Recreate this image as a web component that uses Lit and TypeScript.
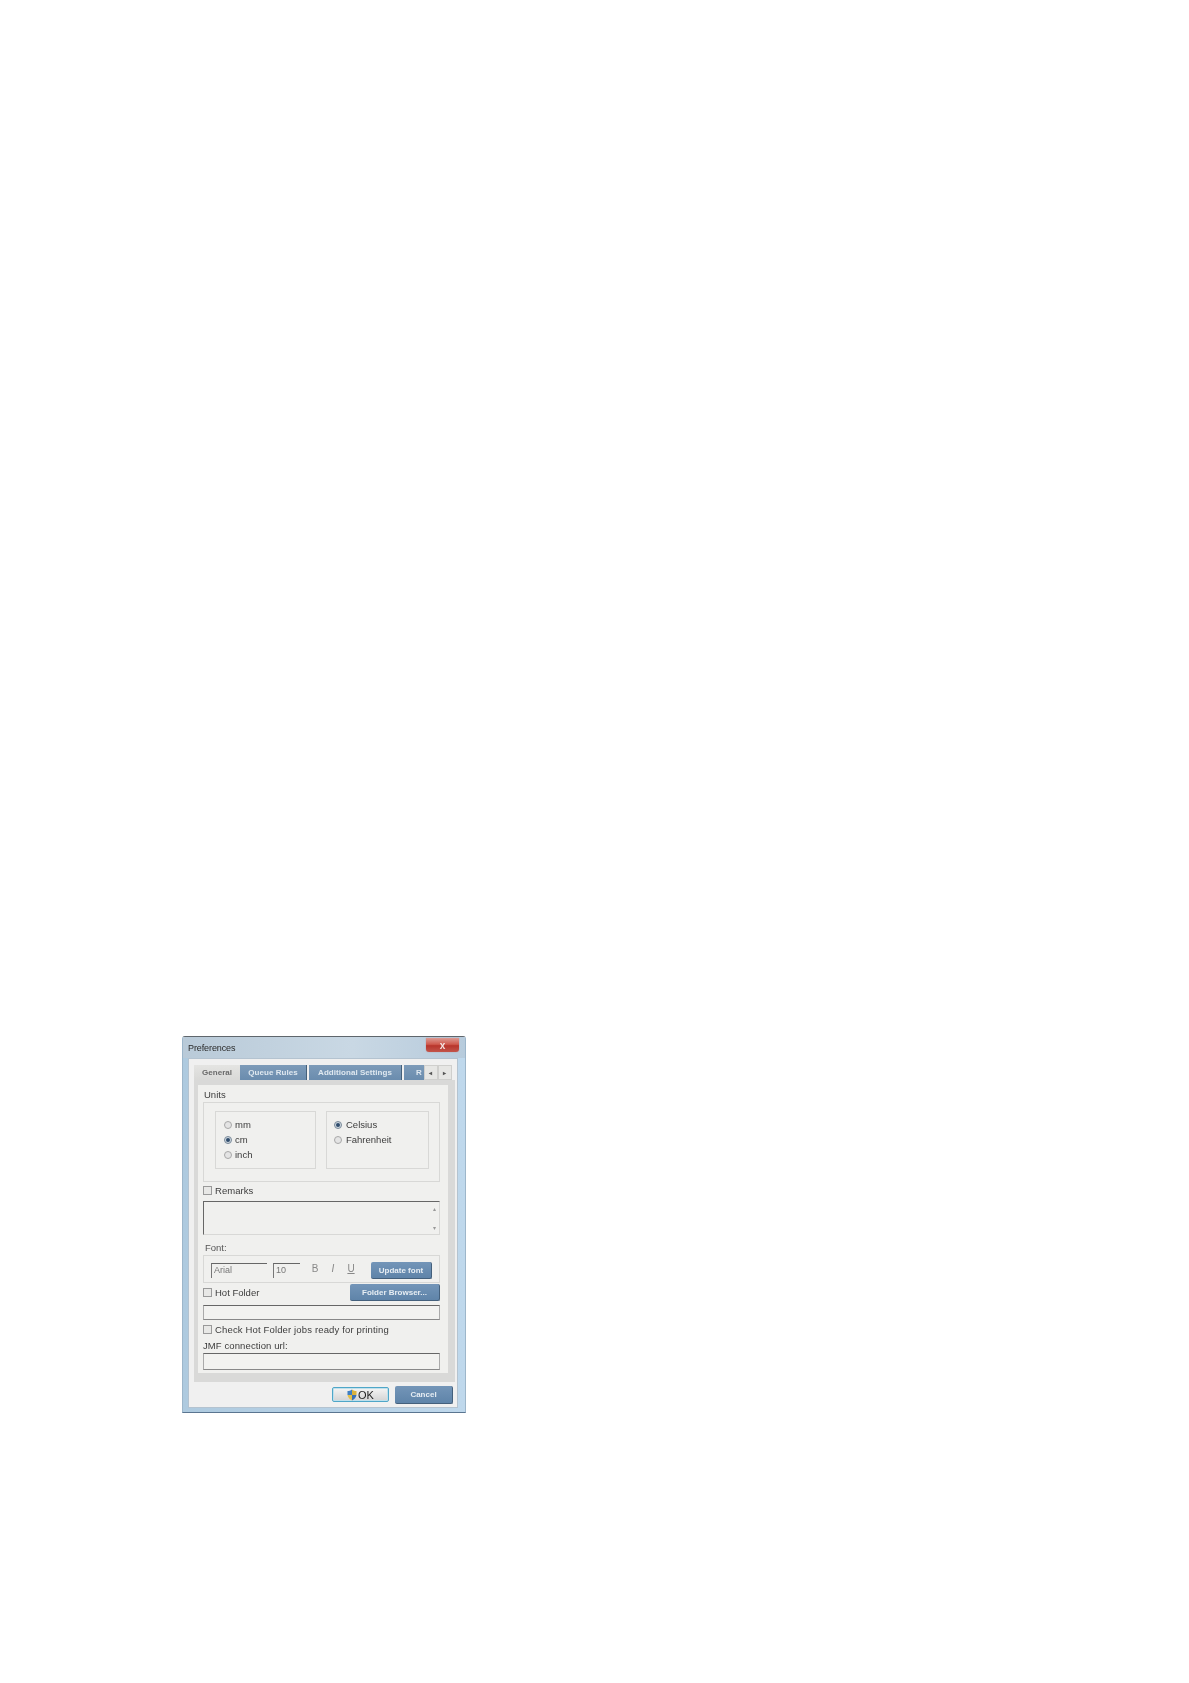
import { LitElement, html, css } from "lit";
import { customElement } from "lit/decorators.js";

@customElement("app-root")
export class AppRoot extends LitElement {
  static styles = css`
    :host { display: block; height: 1683px; background: #fff; padding: 1036px 0 0 182px; box-sizing: border-box;
      font-family: "Liberation Sans", Arial, sans-serif; font-size: 9.5px; color: #3c3c3c; }
    * { box-sizing: border-box; }
    .win { width: 284px; height: 377px; display: flex; flex-direction: column; padding: 0 7px 4px 5px; filter: blur(0.35px);
      border: 1px solid #9db6ca; border-top-color: #5f666c; border-bottom-color: #5a7590; border-radius: 3px 3px 0 0;
      background: linear-gradient(90deg, #aecadf 0, #bfd8ec 100%); }
    .title { height: 21px; flex: none; display: flex; align-items: center; justify-content: space-between; color: #2a2a2a; font-size: 9px; letter-spacing: -0.1px; padding: 1px 4px 0 5px;
      background: linear-gradient(90deg, #b9cad8, #c9d8e4 60%, #b7cbdc); margin: 0 -7px 0 -5px; }
    .close { width: 33px; height: 14px; align-self: flex-start; background: linear-gradient(#dd9a92, #cf5a4e 45%, #b8352c 55%, #c2544a); box-shadow: 0 0 1px #b06a64;
      border-radius: 0 0 3px 3px; color: #f4e6e4; display: flex; align-items: center; justify-content: center; font-size: 10px; font-weight: bold; letter-spacing: 0; margin-right: 2px; }
    .body { flex: 1; background: #f0f0f0; border: 1px solid #b4c3d0; display: flex; flex-direction: column; padding: 6px 4px 0 5px; min-height: 0; }
    .tabs { display: flex; height: 15px; flex: none; width: 258px; font-size: 8px; font-weight: bold; align-items: stretch; letter-spacing: 0.05px; }
    .tab { background: linear-gradient(#7d9bb9, #6a8cae); color: #dfe8f0; display: flex; align-items: center; justify-content: center; border-right: 1px solid #45607a; margin-right: 2px; overflow: hidden; }
    .tab.gen { width: 46px; background: linear-gradient(#e4e4e2, #d9d9d7); color: #6a6a6a; margin-right: 0; border-right: 0; }
    .tab.q { width: 67px; } .tab.a { width: 93px; } .tab.r { width: 20px; margin-right: 0; border-right: 0; justify-content: flex-start; padding-left: 12px; }
    .arrow { width: 14px; background: #e6e6e4; border: 1px solid #cfcfcd; color: #555; display: flex; align-items: center; justify-content: center; font-size: 6px; }
    .frame { flex: none; width: 261px; height: 302px; background: #d9d9d8; padding: 5px 7px 9px 4px; }
    .page { height: 288px; background: #f0f0ee; padding: 3px 0 0 5px; display: flex; flex-direction: column; }
    .lbl { height: 14px; line-height: 14px; flex: none; }
    .lbl.u { padding-left: 1px; }
    .units { height: 80px; border: 1px solid #d8d8d6; display: flex; gap: 10px; padding: 8px 0 0 11px; flex: none; width: 237px; }
    .sub { width: 101px; height: 58px; border: 1px solid #d8d8d6; display: flex; flex-direction: column; padding: 5px 0 0 8px; }
    .sub .opt { gap: 3px; }
    .sub + .sub { width: 103px; padding-left: 7px; }
    .sub + .sub .opt { gap: 4px; }
    .opt { height: 15px; display: flex; align-items: center; }
    .radio { width: 8px; height: 8px; border-radius: 50%; border: 1px solid #a8a8a8; background: #e4e4e4; flex: none; display: flex; align-items: center; justify-content: center; }
    .radio.on { border-color: #7a8a99; background: #cfd8e0; }
    .radio.on::after { content: ""; width: 4px; height: 4px; border-radius: 50%; background: #2f4c6c; }
    .chk { display: flex; align-items: center; gap: 3px; flex: none; }
    .box { width: 9px; height: 9px; border: 1px solid #999; background: #e8e8e6; flex: none; }
    .rem { height: 17px; margin-bottom: 2px; letter-spacing: 0.05px; }
    .area { height: 34px; width: 237px; flex: none; border: 1px solid #d8d8d6; border-top: 1px solid #666; border-left: 1px solid #666; display: flex; flex-direction: column; align-items: flex-end; justify-content: space-between; padding: 3px 3px; color: #999; font-size: 6px; }
    .font { margin-top: 6px; padding-left: 2px; color: #555; }
    .fontrow { width: 237px; height: 28px; flex: none; border: 1px solid #d8d8d6; display: flex; align-items: center; padding: 3px 0 0 7px; }
    .inp { height: 15px; border-top: 1px solid #666; border-left: 1px solid #777; padding-left: 2px; color: #777; line-height: 13px; font-size: 9px; }
    .inp.name { width: 56px; margin-right: 6px; }
    .inp.size { width: 27px; margin-right: 6px; }
    .fmt { color: #888; font-size: 10px; width: 18px; text-align: center; margin-top: -5px; }
    .fmt.i { font-style: italic; } .fmt.un { text-decoration: underline; }
    .btn { background: linear-gradient(#7395b8, #5f84a9); color: #e6edf3; font-weight: bold; font-size: 8px; display: flex; align-items: center; justify-content: center; border-right: 1px solid #44607c; border-bottom: 1px solid #44607c; border-radius: 2px; }
    .update { width: 61px; height: 17px; margin-left: 11px; }
    .browse { width: 90px; height: 17px; }
    .hot { height: 17px; display: flex; align-items: center; justify-content: space-between; width: 237px; flex: none; margin-top: 1px; }
    .field { width: 237px; height: 17px; flex: none; border: 1px solid #aaa; border-top-color: #666; border-bottom-color: #888; background: #f2f2f0; }
    .field.first { margin-top: 4px; height: 15px; }
    .row { height: 17px; margin-top: 1px; letter-spacing: 0.15px; }
    .jmf { height: 14px; line-height: 14px; flex: none; margin-top: 1px; letter-spacing: 0.1px; }
    .foot { flex: 1; display: flex; justify-content: flex-end; align-items: center; gap: 6px; }
    .ok { width: 57px; height: 15px; border: 1px solid #4fa6c8; box-shadow: inset 0 0 0 1px #bfe0ec; border-radius: 2px; background: linear-gradient(#f4f4f4, #d4d4d4); color: #222; display: flex; align-items: center; justify-content: center; font-size: 11px; gap: 1px; }
    .cancel { width: 58px; height: 18px; }
    svg { display: block; }
  `;

  render() {
    return html`<div class="win">
      <div class="title"><span>Preferences</span><span class="close">x</span></div>
      <div class="body">
        <div class="tabs">
          <div class="tab gen">General</div><div class="tab q">Queue Rules</div><div class="tab a">Additional Settings</div><div class="tab r">R</div>
          <div class="arrow">◂</div><div class="arrow">▸</div>
        </div>
        <div class="frame"><div class="page">
          <div class="lbl u">Units</div>
          <div class="units">
            <div class="sub">
              <div class="opt"><span class="radio"></span>mm</div>
              <div class="opt"><span class="radio on"></span>cm</div>
              <div class="opt"><span class="radio"></span>inch</div>
            </div>
            <div class="sub">
              <div class="opt"><span class="radio on"></span>Celsius</div>
              <div class="opt"><span class="radio"></span>Fahrenheit</div>
            </div>
          </div>
          <div class="chk rem"><span class="box"></span>Remarks</div>
          <div class="area"><span>▴</span><span>▾</span></div>
          <div class="lbl font">Font:</div>
          <div class="fontrow">
            <div class="inp name">Arial</div>
            <div class="inp size">10</div>
            <div class="fmt">B</div><div class="fmt i">I</div><div class="fmt un">U</div>
            <div class="btn update">Update font</div>
          </div>
          <div class="hot"><div class="chk"><span class="box"></span>Hot Folder</div><div class="btn browse">Folder Browser...</div></div>
          <div class="field first"></div>
          <div class="chk row"><span class="box"></span>Check Hot Folder jobs ready for printing</div>
          <div class="jmf">JMF connection url:</div>
          <div class="field"></div>
        </div></div>
        <div class="foot">
          <div class="ok"><svg width="10" height="12" viewBox="0 0 10 12"><path d="M5 .5C6.500 1.600 8 2 9.500 2v4H5z" fill="#d9b23c"/><path d="M5 .5C3.500 1.600 2 2 .5 2v4H5z" fill="#3f7fc4"/><path d="M.5 6H5v5.500C2.600 10.500 1 8.500.5 6z" fill="#e3c04a"/><path d="M9.500 6H5v5.500C7.400 10.500 9 8.500 9.500 6z" fill="#3a70b4"/></svg>OK</div>
          <div class="btn cancel">Cancel</div>
        </div>
      </div>
    </div>`;
  }
}
